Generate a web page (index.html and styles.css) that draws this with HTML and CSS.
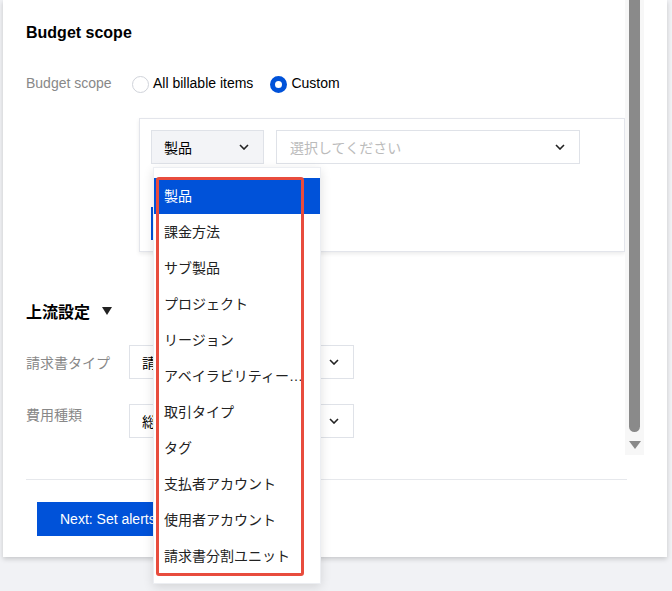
FILE: index.html
```html
<!DOCTYPE html>
<html lang="ja">
<head>
  <meta charset="UTF-8">
  <title>Budget scope</title>
  <link rel="stylesheet" href="styles.css">
</head>
<body>

  <div class="card">
    <div class="content">
      <h2 class="section-title">Budget scope</h2>

      <div class="scope-row">
        <span class="field-label">Budget scope</span>
        <label class="radio"><span class="radio-dot"></span>All billable items</label>
        <label class="radio checked"><span class="radio-dot"></span>Custom</label>
      </div>

      <div class="scope-panel">
        <div class="panel-row">
          <div class="select select-type">
            <span>製品</span>
            <svg class="chev" width="10" height="6" viewBox="0 0 10 6"><path d="M1 1l4 4 4-4" fill="none" stroke="#222" stroke-width="1.6"/></svg>

            <div class="dropdown">
              <div class="option active">製品</div>
              <div class="option">課金方法</div>
              <div class="option">サブ製品</div>
              <div class="option">プロジェクト</div>
              <div class="option">リージョン</div>
              <div class="option">アベイラビリティーゾーン</div>
              <div class="option">取引タイプ</div>
              <div class="option">タグ</div>
              <div class="option">支払者アカウント</div>
              <div class="option">使用者アカウント</div>
              <div class="option">請求書分割ユニット</div>
              <div class="mark"></div>
            </div>
          </div>
          <div class="select select-value">
            <span class="placeholder">選択してください</span>
            <svg class="chev" width="10" height="6" viewBox="0 0 10 6"><path d="M1 1l4 4 4-4" fill="none" stroke="#222" stroke-width="1.6"/></svg>
          </div>
        </div>
        <div class="add-row"></div>
      </div>

      <h2 class="section-title upstream">上流設定
        <svg width="10" height="8" viewBox="0 0 10 8"><path d="M0 0h10L5 8z" fill="#222"/></svg>
      </h2>

      <div class="form-row center">
        <span class="field-label">請求書タイプ</span>
        <div class="select wide">
          <span>請求書</span>
          <svg class="chev" width="10" height="6" viewBox="0 0 10 6"><path d="M1 1l4 4 4-4" fill="none" stroke="#222" stroke-width="1.6"/></svg>
        </div>
      </div>

      <div class="form-row">
        <span class="field-label">費用種類</span>
        <div class="select wide">
          <span>総額</span>
          <svg class="chev" width="10" height="6" viewBox="0 0 10 6"><path d="M1 1l4 4 4-4" fill="none" stroke="#222" stroke-width="1.6"/></svg>
        </div>
      </div>

      <div class="divider"></div>

      <button class="primary-btn">Next: Set alerts</button>
    </div>

    <div class="scrollbar">
      <div class="thumb"></div>
      <svg class="arrow" width="12" height="8" viewBox="0 0 12 8"><path d="M0 0h12L6 8z" fill="#8a8a8a"/></svg>
    </div>
  </div>

</body>
</html>
```

FILE: styles.css
```css
html, body {
  height: 100%;
}

body {
  margin: 0;
  min-height: 591px;
  background: #f1f2f5;
  font-family: "Liberation Sans", Arial, "Noto Sans CJK JP", sans-serif;
  font-size: 14px;
  color: #000;
}

.card {
  position: relative;
  margin-left: 3px;
  width: 664px;
  height: 557px;
  background: #fff;
  box-shadow: 0 2px 5px rgba(0, 0, 0, 0.18);
}

.content {
  padding: 23px 0 0 23px;
  width: 601px;
}

.section-title {
  margin: 0;
  font-size: 16px;
  line-height: 20px;
  font-weight: bold;
  color: #000;
}

.field-label {
  color: #888;
  line-height: 20px;
}

.scope-row {
  display: flex;
  align-items: center;
  margin-top: 30px;
  height: 20px;
}

.scope-row .field-label {
  width: 106px;
}

.radio {
  display: flex;
  align-items: center;
  gap: 4px;
  margin-right: 17px;
  color: #000;
}

.radio-dot {
  width: 15px;
  height: 15px;
  border: 1px solid #d0d3da;
  border-radius: 50%;
  margin-top: 2px;
  box-sizing: content-box;
}

.radio.checked .radio-dot {
  width: 7px;
  height: 7px;
  border: 5px solid #0052d9;
}

.scope-panel {
  margin: 25px 0 0 113px;
  width: 486px;
  height: 134px;
  box-sizing: border-box;
  padding: 11px 11px;
  border: 1px solid #e3e5eb;
  box-shadow: 0 2px 4px rgba(0, 0, 0, 0.08);
}

.panel-row {
  display: flex;
  gap: 12px;
}

.select {
  position: relative;
  display: flex;
  align-items: center;
  justify-content: space-between;
  height: 34px;
  box-sizing: border-box;
  padding: 0 14px 0 12px;
  border: 1px solid #dfe2e8;
  background: #fff;
  font-family: "Noto Sans CJK JP", "Liberation Sans", sans-serif;
}

.select-type {
  width: 113px;
  background: #f3f4f7;
}

.select-value {
  width: 304px;
  padding-left: 13px;
}

.placeholder {
  color: #bbb;
}

.chev {
  flex: none;
}

.add-row {
  margin-top: 43px;
  height: 33px;
  border-left: 3px solid #0052d9;
}

.upstream {
  margin-top: 49px;
  display: flex;
  align-items: center;
  gap: 12px;
  font-family: "Noto Sans CJK JP", sans-serif;
}

.form-row {
  display: flex;
  align-items: flex-start;
  margin-top: 24px;
  font-family: "Noto Sans CJK JP", sans-serif;
}

.form-row.center {
  align-items: center;
}

.form-row + .form-row {
  margin-top: 25px;
}

.form-row .field-label {
  width: 103px;
}

.select.wide {
  width: 225px;
}

.divider {
  margin-top: 41px;
  height: 1px;
  background: #e6e8ec;
}

.primary-btn {
  margin: 22px 0 0 11px;
  height: 34px;
  padding: 0 23px;
  border: none;
  background: #0052d9;
  color: #fff;
  font-family: "Liberation Sans", Arial, sans-serif;
  font-size: 14px;
}

.dropdown {
  position: absolute;
  top: 36px;
  left: 1px;
  z-index: 10;
  width: 166px;
  padding: 10px 0 9px;
  background: #fff;
  border: 1px solid #eceef2;
  box-shadow: 0 3px 10px rgba(0, 0, 0, 0.12);
  font-family: "Liberation Sans", "Noto Sans CJK JP", sans-serif;
}

.option {
  height: 36px;
  line-height: 36px;
  padding: 0 12px 0 10px;
  white-space: nowrap;
  overflow: hidden;
  text-overflow: ellipsis;
  color: #222;
}

.option.active {
  background: #0052d9;
  color: #fff;
}

.mark {
  position: absolute;
  top: 9px;
  left: 2px;
  width: 148px;
  height: 399px;
  box-sizing: border-box;
  border: 3px solid #e84c3d;
  border-radius: 3px;
}

.scrollbar {
  position: absolute;
  top: 0;
  left: 622px;
  width: 19px;
  height: 455px;
  background: #f7f7f7;
}

.thumb {
  margin-left: 4px;
  width: 11px;
  height: 432px;
  background: #8a8a8a;
  border-radius: 0 0 6px 6px;
}

.arrow {
  display: block;
  margin: 9px 0 0 4px;
}
```
